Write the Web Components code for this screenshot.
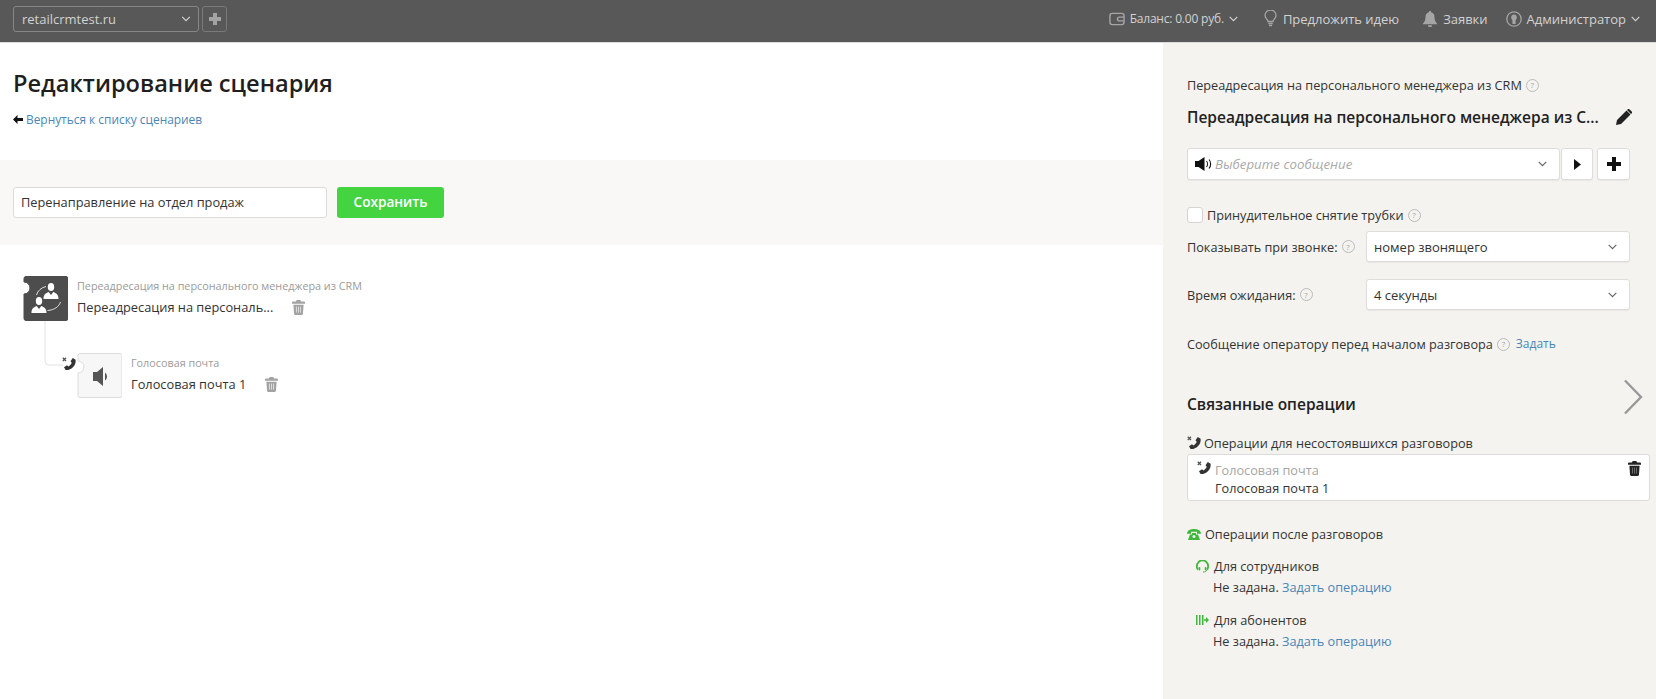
<!DOCTYPE html>
<html lang="ru">
<head>
<meta charset="utf-8">
<title>Редактирование сценария</title>
<style>
  html, body { margin: 0; height: 100%; background: #fff; }
  body { font-family: "Open Sans", "Liberation Sans", sans-serif; color: #333; overflow: hidden; }
</style>
</head>
<body>
<crm-topbar></crm-topbar>
<crm-layout>
  <crm-editor slot="main"></crm-editor>
  <crm-panel slot="side"></crm-panel>
</crm-layout>

<script>
const chevron = (color, w = 9) => `<svg width="${w}" height="6" viewBox="0 0 9 6" fill="none" style="flex:none"><path d="M.7.8l3.800 3.800L8.300.8" stroke="${color}" stroke-width="1.200"/></svg>`;

const phoneMissed = (color = "#333") => `<svg width="14" height="14" viewBox="0 0 14 14" style="display:block">
  <path d="M.8.8l3.200 3.200M4 .8L.8 4" stroke="#555" stroke-width="1.300" fill="none"/>
  <path d="M10.800 1l2.800 1.700c.4 3-.7 5.600-2.700 7.500-2 1.900-4.400 3-7.300 2.800L2 10.300l3-2 1.400 1.100c1.600-.9 2.700-2.100 3.300-3.700L8.500 4.200z" fill="${color}"/>
</svg>`;

const trash = (color, inner = "#fff") => `<svg width="13" height="15" viewBox="0 0 14 16" style="flex:none;display:block">
  <path d="M5 0h4l.7 1.600H13c.6 0 1 .4 1 1V4H0V2.600c0-.6.4-1 1-1h3.300z" fill="${color}"/>
  <path d="M1.500 5h11l-.7 9.700c0 .7-.6 1.300-1.300 1.300h-7c-.7 0-1.300-.6-1.300-1.300z" fill="${color}"/>
  <path d="M4.800 7v6.500M7 7v6.500M9.200 7v6.500" stroke="${inner}" stroke-width=".9" opacity=".75"/>
</svg>`;

class CrmLayout extends HTMLElement {
  constructor() {
    super();
    this.attachShadow({ mode: "open" });
    this.shadowRoot.innerHTML = `
    <style>
      :host { display: grid; grid-template-columns: 1163px 1fr; height: 656px; }
    </style>
    <slot name="main"></slot>
    <slot name="side"></slot>`;
  }
}

class CrmHelp extends HTMLElement {
  constructor() {
    super();
    this.attachShadow({ mode: "open" });
    this.shadowRoot.innerHTML = `
    <style>
      :host {
        display: inline-flex; align-items: center; justify-content: center;
        width: 11px; height: 11px; border: 1px solid #bbb; border-radius: 50%;
        font-size: 8px; line-height: 1; color: #a5a5a5; flex: none; margin-left: 4px;
      }
    </style>?`;
  }
}

class CrmSelect extends HTMLElement {
  constructor() {
    super();
    this.attachShadow({ mode: "open" });
    this.shadowRoot.innerHTML = `
    <style>
      :host {
        display: flex; align-items: center; box-sizing: border-box; height: 32px;
        background: #fff; border: 1px solid #dedddb; border-radius: 3px;
        padding: 0 12px 0 7px; font-size: 13px; color: #333; box-shadow: 0 1px 1px rgba(0,0,0,.05);
      }
      .val { flex: 1; min-width: 0; white-space: nowrap; }
    </style>
    <div class="val"><slot></slot></div>
    ${chevron("#666")}`;
  }
}

class CrmTopbar extends HTMLElement {
  constructor() {
    super();
    this.attachShadow({ mode: "open" });
    this.shadowRoot.innerHTML = `
    <style>
      :host {
        display: flex; align-items: center; box-sizing: border-box; height: 43px; padding: 0 16px 5px 13px;
        background: #585858; border-bottom: 1px solid #dcdcdc; color: #d2d2d2; font-size: 13px;
      }
      .domain {
        display: flex; align-items: center; justify-content: space-between; box-sizing: border-box;
        width: 186px; height: 26px; padding: 0 7px 0 8px;
        border: 1px solid #868686; border-radius: 3px; font-size: 13px;
      }
      .add {
        display: flex; align-items: center; justify-content: center; box-sizing: border-box;
        width: 25px; height: 26px; margin-left: 3px;
        border: 1px solid #7a7a7a; border-radius: 3px;
      }
      .right { margin-left: auto; display: flex; align-items: center; }
      .item { display: flex; align-items: center; }
      .item svg:last-child { margin-left: 5px; }
      .bal { font-size: 12px; letter-spacing: -.2px; }
    </style>
    <div class="domain">retailcrmtest.ru ${chevron("#d2d2d2", 10)}</div>
    <div class="add"><svg width="14" height="14" viewBox="0 0 14 14"><path d="M5 1h4v4h4v4H9v4H5V9H1V5h4z" fill="#a3a3a3"/></svg></div>
    <div class="right">
      <div class="item">
        <svg width="16" height="14" viewBox="0 0 17 14" style="margin-right:5px" fill="none"><rect x="1" y="1" width="15" height="12" rx="2.500" stroke="#a5a5a5" stroke-width="1.500"/><path d="M16 5h-5a2 2 0 000 4h5" stroke="#a5a5a5" stroke-width="1.500"/></svg>
        <span class="bal">Баланс: 0.00 руб.</span>
        ${chevron("#d2d2d2")}
      </div>
      <div class="item" style="margin-left:21px">
        <svg width="13" height="17" viewBox="0 0 13 17" style="margin-right:6px" fill="none"><path d="M4 11.500C4 9.500 1 8.500 1 5.500a5.500 5.500 0 0111 0c0 3-3 4-3 6z" stroke="#a5a5a5" stroke-width="1.300"/><path d="M4.300 13.500h4.400M5 15.500h3" stroke="#a5a5a5" stroke-width="1.400"/></svg>
        Предложить идею
      </div>
      <div class="item" style="margin-left:19px">
        <svg width="14" height="16" viewBox="0 0 14 16" style="margin-right:6px"><path d="M7 0c.7 0 1.200.4 1.200 1.200C10.500 1.800 11.500 3.500 11.500 6c0 3 .7 4.500 2.500 6.500v.8H0v-.8C1.800 10.500 2.500 9 2.500 6c0-2.500 1-4.200 3.300-4.800C5.800.4 6.300 0 7 0z" fill="#a5a5a5"/><path d="M5 14.200h4a2 2 0 01-4 0z" fill="#a5a5a5"/></svg>
        Заявки
      </div>
      <div class="item" style="margin-left:18px">
        <svg width="16" height="16" viewBox="0 0 16 16" style="margin-right:5px" fill="none"><circle cx="8" cy="8" r="7.200" stroke="#a5a5a5" stroke-width="1.300"/><path d="M8 3.500c1.700 0 2.800 1.300 2.800 3 0 1.200-.6 2-1.200 2.700v3.800H6.400V9.200C5.800 8.500 5.200 7.700 5.200 6.500c0-1.700 1.100-3 2.800-3z" fill="#a5a5a5"/></svg>
        Администратор
        ${chevron("#d2d2d2")}
      </div>
    </div>`;
  }
}

class CrmNode extends HTMLElement {
  constructor() {
    super();
    this.attachShadow({ mode: "open" });
  }
  connectedCallback() {
    const dark = this.getAttribute("kind") === "dark";
    const tile = dark
      ? "M3 .5h40a2 2 0 012 2v40a2 2 0 01-2 2H3a2 2 0 01-2-2V18a6 6 0 000-12V2.500a2 2 0 012-2z"
      : "M3 .5h40a2 2 0 012 2v40a2 2 0 01-2 2H3a2 2 0 01-2-2V20a6 6 0 000-12V2.500a2 2 0 012-2z";
    const person = (x, y) => `
      <g transform="translate(${x} ${y})">
        <ellipse cx="0" cy="-4" rx="3.200" ry="4"/>
        <path d="M-7.500 8c0-4 1.500-5.500 5.200-7L0 4l2.300-3c3.700 1.500 5.200 3 5.200 7z"/>
      </g>`;
    const glyph = dark ? `
      <path d="M13.500 19c1.200-4.500 5-7.500 9.500-8.500M37.500 26c-1.500 4.500-6 8-13 8.500" fill="none" stroke="#fff" stroke-width="1" opacity=".8"/>
      <g fill="#fff">${person(28, 15)}${person(16, 29)}</g>` : `
      <path d="M16 19h4l6-5v19l-6-5h-4z" fill="#555"/>
      <path d="M28 19.500a5 5 0 010 8z" fill="#555"/>`;
    this.shadowRoot.innerHTML = `
    <style>
      :host { display: flex; align-items: flex-start; }
      .tile { flex: none; display: block; }
      .body { margin-left: 9px; }
      .kind { font-size: 10.800px; line-height: 14px; color: #9b9b9b; margin-top: 3px; white-space: nowrap; }
      .row { display: flex; align-items: center; margin-top: 5px; }
      .name { font-size: 12.800px; line-height: 18px; color: #333; white-space: nowrap; }
      .row svg { margin-left: 19px; }
    </style>
    <svg class="tile" width="45" height="45" viewBox="0 0 45 45">
      <path d="${tile}" fill="${dark ? "#4d4d4d" : "#f7f7f7"}" stroke="${dark ? "#4d4d4d" : "#dcdcdc"}"/>
      ${glyph}
    </svg>
    <div class="body">
      <div class="kind"><slot name="kind"></slot></div>
      <div class="row"><div class="name"><slot></slot></div>${trash("#a3a3a3")}</div>
    </div>`;
  }
}

class CrmEditor extends HTMLElement {
  constructor() {
    super();
    this.attachShadow({ mode: "open" });
    this.shadowRoot.innerHTML = `
    <style>
      :host { display: block; }
      .head { padding: 24px 13px 0; height: 93px; }
      h1 { margin: 0; font-size: 23.600px; line-height: 32px; font-weight: 600; color: #1f1f1f; }
      .back { display: flex; align-items: center; margin-top: 11px; font-size: 11.900px; line-height: 18px; color: #4a86b8; }
      .back svg { margin-right: 3px; }
      .bar { display: flex; gap: 10px; background: #f9f8f6; height: 85px; padding: 27px 13px 0; box-sizing: border-box; }
      .input {
        box-sizing: border-box; width: 314px; height: 31px; padding: 0 7px; background: #fff;
        border: 1px solid #dcdbd9; border-radius: 3px; font-size: 12.800px; line-height: 28px; color: #333;
      }
      .save {
        width: 107px; height: 31px; background: #44d440; border-radius: 3px; color: #fff;
        font-size: 13.600px; font-weight: 600; line-height: 29px; text-align: center;
      }
      .canvas { position: relative; padding: 31px 0 0 23px; }
      .canvas crm-node + crm-node { margin: 32px 0 0 54px; }
      .link { position: absolute; left: 44px; top: 76px; }
      .hang { position: absolute; left: 62px; top: 112px; }
    </style>
    <div class="head">
      <h1>Редактирование сценария</h1>
      <div class="back">
        <svg width="10" height="9" viewBox="0 0 10 9"><path d="M4.500 0v3H10v3H4.500v3L0 4.500z" fill="#111"/></svg>
        <span>Вернуться к списку сценариев</span>
      </div>
    </div>
    <div class="bar">
      <div class="input">Перенаправление на отдел продаж</div>
      <div class="save">Сохранить</div>
    </div>
    <div class="canvas">
      <svg class="link" width="24" height="46" viewBox="0 0 24 46" fill="none"><path d="M1 0v40a4 4 0 004 4h14" stroke="#e2e2e2" stroke-width="1"/></svg>
      <div class="hang">${phoneMissed()}</div>
      <crm-node kind="dark">
        <span slot="kind">Переадресация на персонального менеджера из CRM</span>
        Переадресация на персональ...
      </crm-node>
      <crm-node kind="light">
        <span slot="kind">Голосовая почта</span>
        Голосовая почта 1
      </crm-node>
    </div>`;
  }
}

class CrmPanel extends HTMLElement {
  constructor() {
    super();
    this.attachShadow({ mode: "open" });
    this.shadowRoot.innerHTML = `
    <style>
      :host { display: block; background: #f4f3f0; padding: 33px 6px 0 24px; font-size: 12.700px; color: #333; height: 100%; box-sizing: border-box; }
      a { color: #4a86b8; text-decoration: none; }
      .line { display: flex; align-items: center; white-space: nowrap; line-height: 18px; }
      .title { display: flex; justify-content: space-between; align-items: center; width: 445px; margin-top: 12px; font-size: 15.500px; font-weight: 600; line-height: 22px; color: #222; white-space: nowrap; }
      .msg { display: flex; margin-top: 20px; }
      .msg crm-select { width: 373px; }
      .hint { color: #aaa; font-style: italic; font-size: 13.300px; margin-left: 3px; }
      .sq {
        box-sizing: border-box; height: 32px; background: #fff; border: 1px solid #dedddb; border-radius: 3px;
        display: flex; align-items: center; justify-content: center; box-shadow: 0 1px 1px rgba(0,0,0,.05);
      }
      .check { width: 16px; height: 16px; box-sizing: border-box; background: #fff; border: 1px solid #d5d4d2; border-radius: 3px; margin-right: 4px; }
      .field { display: grid; grid-template-columns: 179px 264px; align-items: center; }
      .field crm-select { height: 31px; }
      h2 { margin: 0; font-size: 15.500px; font-weight: 600; line-height: 22px; color: #222; }
      .related { display: flex; justify-content: space-between; align-items: flex-start; height: 34px; margin-top: 26px; }
      .related h2 { margin-top: 14px; }
      .related svg { margin-right: 7px; }
      .card {
        position: relative; box-sizing: border-box; height: 47px; margin-top: 2px; background: #fff; border: 1px solid #dcdbd9; border-radius: 3px;
        padding: 6px 0 0 27px; line-height: 18px;
      }
      .card .ph { position: absolute; left: 9px; top: 6px; }
      .card .del { position: absolute; right: 8px; top: 6px; }
      .muted { color: #a5a5a5; }
      .sub { margin: 0 0 0 9px; }
      .sub .line svg { margin-right: 5px; }
      .none { padding-left: 17px; margin-top: 3px; line-height: 18px; white-space: nowrap; }
    </style>
    <div class="line">Переадресация на персонального менеджера из CRM<crm-help></crm-help></div>
    <div class="title">
      <span>Переадресация на персонального менеджера из С...</span>
      <svg width="16" height="16" viewBox="0 0 16 16"><path d="M0 16l1-5L10.500 1.500l4 4L5 15zM11.500.500c.7-.7 1.500-.7 2.200 0l1.800 1.800c.7.700.7 1.500 0 2.200l-.5.5-4-4z" fill="#222"/></svg>
    </div>
    <div class="msg">
      <crm-select>
        <span style="display:flex;align-items:center">
          <svg width="17" height="14" viewBox="0 0 17 14"><path d="M0 4h3.500L9.500 0v14L3.500 10H0z" fill="#111"/><path d="M11.500 4c1.300 1.600 1.300 4.400 0 6M14 2.500c2.200 2.400 2.200 6.600 0 9" fill="none" stroke="#111" stroke-width="1.100"/></svg>
          <span class="hint">Выберите сообщение</span>
        </span>
      </crm-select>
      <div class="sq" style="width:32px;margin-left:1px"><svg width="7" height="11" viewBox="0 0 7 11"><path d="M0 0l7 5.500L0 11z" fill="#111"/></svg></div>
      <div class="sq" style="width:33px;margin-left:4px"><svg width="14" height="14" viewBox="0 0 14 14"><path d="M5 0h4v5h5v4H9v5H5V9H0V5h5z" fill="#111"/></svg></div>
    </div>
    <div class="line" style="margin-top:26px"><div class="check"></div>Принудительное снятие трубки<crm-help></crm-help></div>
    <div class="field" style="margin-top:7px">
      <div class="line">Показывать при звонке:<crm-help></crm-help></div>
      <crm-select>номер звонящего</crm-select>
    </div>
    <div class="field" style="margin-top:17px">
      <div class="line">Время ожидания:<crm-help></crm-help></div>
      <crm-select>4 секунды</crm-select>
    </div>
    <div class="line" style="margin-top:25px">Сообщение оператору перед началом разговора<crm-help></crm-help><a href="#" style="margin-left:6px;font-size:12px">Задать</a></div>
    <div class="related">
      <h2>Связанные операции</h2>
      <svg width="20" height="36" viewBox="0 0 20 36" fill="none"><path d="M2 1.500L18 18 2 34.500" stroke="#999" stroke-width="2.400"/></svg>
    </div>
    <div class="line" style="margin-top:21px"><span style="display:flex;margin-right:3px">${phoneMissed()}</span>Операции для несостоявшихся разговоров</div>
    <div class="card">
      <span class="ph">${phoneMissed()}</span>
      <span class="del">${trash("#222", "#999")}</span>
      <div class="muted">Голосовая почта</div>
      <div>Голосовая почта 1</div>
    </div>
    <div class="line" style="margin-top:24px">
      <svg width="14" height="11" viewBox="0 0 14 11" style="margin-right:4px"><path d="M0 4.800C0 1 4 0 7 0s7 1 7 4.800H10V2.800H4v2z" fill="#3fb83c"/><path d="M3 5.500h2V4h4v1.500h2L13 11H1z" fill="#3fb83c"/><circle cx="7" cy="7.500" r="1.500" fill="#f4f3f0"/></svg>
      Операции после разговоров
    </div>
    <div class="sub" style="margin-top:14px">
      <div class="line">
        <svg width="13" height="13" viewBox="0 0 13 13" fill="none"><path d="M2 9.500C.6 8.500.9 6.800.9 6a5.600 5.600 0 0111.200 0c0 .8.300 2.500-1.100 3.500" stroke="#3fb83c" stroke-width="1.800"/><path d="M11 9.500c-.3 1.800-1.800 2.500-4 2.500" stroke="#3fb83c" stroke-width="1"/><rect x="2.500" y="7" width="1.800" height="3.500" rx=".8" fill="#3fb83c"/><rect x="8.700" y="7" width="1.800" height="3.500" rx=".8" fill="#3fb83c"/></svg>
        Для сотрудников
      </div>
      <div class="none">Не задана. <a href="#">Задать операцию</a></div>
    </div>
    <div class="sub" style="margin-top:15px">
      <div class="line">
        <svg width="13" height="12" viewBox="0 0 13 12" fill="#3fb83c"><path d="M0 1h1.500v10H0zM3 1h1.500v10H3zM6 1h1.500v10H6z"/><path d="M8 5.200h2V3l3 3-3 3V6.800H8z"/></svg>
        Для абонентов
      </div>
      <div class="none">Не задана. <a href="#">Задать операцию</a></div>
    </div>`;
  }
}

customElements.define("crm-help", CrmHelp);
customElements.define("crm-select", CrmSelect);
customElements.define("crm-node", CrmNode);
customElements.define("crm-topbar", CrmTopbar);
customElements.define("crm-layout", CrmLayout);
customElements.define("crm-editor", CrmEditor);
customElements.define("crm-panel", CrmPanel);
</script>
</body>
</html>
